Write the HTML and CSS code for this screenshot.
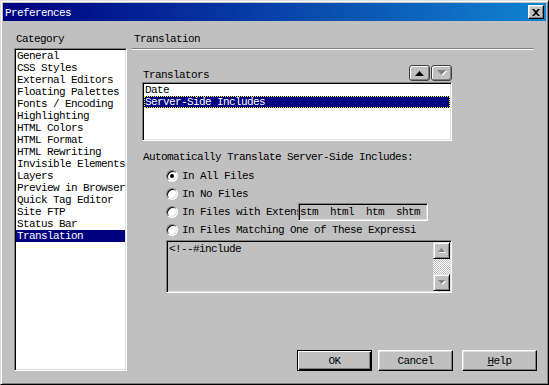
FILE: index.html
```html
<!DOCTYPE html>
<html lang="en">
<head>
    <meta charset="UTF-8">
    <title>Preferences</title>
    <link rel="stylesheet" href="styles.css">
</head>
<body>
    <div class="window">
        <div class="titlebar">
            <span class="title">Preferences</span>
            <span class="close-btn">
                <svg width="8" height="7" viewBox="0 0 8 7"><path d="M0 0h2l2 2 2-2h2L5 3.5 8 7H6L4 5 2 7H0l3-3.5z"/></svg>
            </span>
        </div>
        <div class="content">
            <div class="category-col">
                <div class="label">Category</div>
                <ul class="listbox category-list">
                    <li>General</li>
                    <li>CSS Styles</li>
                    <li>External Editors</li>
                    <li>Floating Palettes</li>
                    <li>Fonts / Encoding</li>
                    <li>Highlighting</li>
                    <li>HTML Colors</li>
                    <li>HTML Format</li>
                    <li>HTML Rewriting</li>
                    <li>Invisible Elements</li>
                    <li>Layers</li>
                    <li>Preview in Browser</li>
                    <li>Quick Tag Editor</li>
                    <li>Site FTP</li>
                    <li>Status Bar</li>
                    <li class="selected">Translation</li>
                </ul>
            </div>
            <div class="panel">
                <div class="label">Translation</div>
                <div class="rule"></div>
                <div class="panel-body">
                    <div class="translators-head">
                        <span class="translators-label">Translators</span>
                        <div class="arrow-btns">
                            <span class="arrow-btn">
                                <svg width="9" height="5" viewBox="0 0 9 5"><path d="M4.5 0L9 5H0z"/></svg>
                            </span>
                            <span class="arrow-btn">
                                <svg width="10" height="6" viewBox="0 0 10 6"><path d="M1 1h9L5.5 6z" fill="#fff"/><path d="M0 0h9L4.5 5z" fill="#808080"/></svg>
                            </span>
                        </div>
                    </div>
                    <ul class="listbox translators-list">
                        <li>Date</li>
                        <li class="selected focused">Server-Side Includes</li>
                    </ul>
                    <div class="auto-label">Automatically Translate Server-Side Includes:</div>
                    <div class="radio-group">
                        <div class="radio-row">
                            <span class="radio checked"></span>
                            <span class="radio-text">In All Files</span>
                        </div>
                        <div class="radio-row">
                            <span class="radio"></span>
                            <span class="radio-text">In No Files</span>
                        </div>
                        <div class="radio-row">
                            <span class="radio"></span>
                            <span class="radio-text ext-label">In Files with Extensions:</span>
                            <div class="field ext-field">stm  html  htm  shtm</div>
                        </div>
                        <div class="radio-row">
                            <span class="radio"></span>
                            <span class="radio-text match-label">In Files Matching One of These Expressions:</span>
                        </div>
                        <div class="field textarea">
                            <div class="textarea-text">&lt;!--#include</div>
                            <div class="scrollbar">
                                <span class="scroll-btn">
                                    <svg width="8" height="5" viewBox="0 0 8 5"><path d="M4.5 1L8 5H1z" fill="#fff"/><path d="M3.5 0L7 4H0z" fill="#808080"/></svg>
                                </span>
                                <span class="scroll-track"></span>
                                <span class="scroll-btn">
                                    <svg width="8" height="5" viewBox="0 0 8 5"><path d="M1 1h7L4.5 5z" fill="#fff"/><path d="M0 0h7L3.5 4z" fill="#808080"/></svg>
                                </span>
                            </div>
                        </div>
                    </div>
                </div>
                <div class="dialog-buttons">
                    <button class="btn default">OK</button>
                    <button class="btn">Cancel</button>
                    <button class="btn help"><u>H</u>elp</button>
                </div>
            </div>
        </div>
    </div>
</body>
</html>
```

FILE: styles.css
```css
body {
    margin: 0;
    background-color: #c0c0c0;
    font-family: "Liberation Mono", "DejaVu Sans Mono", monospace;
    font-size: 11px;
    letter-spacing: -0.6px;
    line-height: 12px;
    color: #000;
}
.window {
    width: 549px;
    height: 385px;
    box-sizing: border-box;
    padding: 2px;
    background-color: #c0c0c0;
    border: 1px solid;
    border-color: #dfdfdf #000 #000 #dfdfdf;
    box-shadow: inset 1px 1px #fff, inset -1px -1px #808080;
    display: flex;
    flex-direction: column;
}
.titlebar {
    height: 18px;
    padding: 0 2px;
    background: linear-gradient(90deg, #000080, #1084d0);
    color: #fff;
    display: flex;
    align-items: center;
    justify-content: space-between;
}
.title {
    padding-top: 1px;
}
.close-btn {
    width: 16px;
    height: 14px;
    box-sizing: border-box;
    background-color: #c0c0c0;
    border: 1px solid;
    border-color: #fff #000 #000 #fff;
    box-shadow: inset -1px -1px #808080, inset 1px 1px #dfdfdf;
    display: flex;
    align-items: center;
    justify-content: center;
}
.content {
    flex: 1;
    display: flex;
    gap: 5px;
    padding: 12px 9px 11px 11px;
}
.category-col {
    width: 113px;
    display: flex;
    flex-direction: column;
}
.label {
    height: 12px;
    padding-left: 2px;
    margin-bottom: 3px;
}
.listbox {
    margin: 0;
    padding: 1px;
    list-style: none;
    background-color: #fff;
    border: 1px solid;
    border-color: #808080 #fff #fff #808080;
    box-shadow: inset 1px 1px #000, inset -1px -1px #dfdfdf;
    white-space: nowrap;
    overflow: hidden;
}
.listbox li {
    height: 12px;
    padding-left: 1px;
}
.listbox li.selected {
    background-color: #000080;
    color: #fff;
}
.listbox li.focused {
    outline: 1px dotted #ffff00;
    outline-offset: -1px;
}
.category-list {
    flex: 1;
}
.panel {
    width: 405px;
    display: flex;
    flex-direction: column;
}
.rule {
    width: 402px;
    border-top: 1px solid #808080;
    border-bottom: 1px solid #fff;
}
.panel-body {
    padding-left: 10px;
}
.translators-head {
    width: 310px;
    height: 32px;
    display: flex;
    justify-content: space-between;
    align-items: flex-end;
}
.translators-label {
    padding-left: 1px;
    margin-bottom: 1px;
}
.arrow-btns {
    display: flex;
    gap: 1px;
    margin-bottom: 1px;
}
.arrow-btn {
    width: 21px;
    height: 16px;
    box-sizing: border-box;
    border: 1px solid #404040;
    border-radius: 3px;
    background-color: #c0c0c0;
    box-shadow: inset 1px 1px #fff, inset -1px -1px #808080;
    display: flex;
    align-items: center;
    justify-content: center;
}
.translators-list {
    width: 310px;
    height: 59px;
    box-sizing: border-box;
}
.auto-label {
    margin-top: 10px;
    padding-left: 1px;
}
.radio-group {
    margin-top: 4px;
    padding-left: 24px;
}
.radio-row {
    height: 18px;
    display: flex;
    align-items: center;
}
.radio {
    width: 12px;
    height: 12px;
    box-sizing: border-box;
    border-radius: 50%;
    border: 1px solid;
    border-color: #808080 #fff #fff #808080;
    box-shadow: inset 1px 1px #000, inset -1px -1px #dfdfdf;
    background-color: #fff;
    margin-right: 4px;
    flex-shrink: 0;
    display: flex;
    align-items: center;
    justify-content: center;
}
.radio.checked::after {
    content: "";
    width: 4px;
    height: 4px;
    border-radius: 50%;
    background-color: #000;
}
.radio-text {
    white-space: nowrap;
    overflow: hidden;
}
.ext-label {
    width: 116px;
}
.match-label {
    width: 234px;
}
.field {
    box-sizing: border-box;
    background-color: #c0c0c0;
    border: 1px solid;
    border-color: #808080 #fff #fff #808080;
    box-shadow: inset 1px 1px #000, inset -1px -1px #dfdfdf;
}
.ext-field {
    width: 130px;
    height: 18px;
    padding: 2px 2px 0 1px;
    white-space: pre;
    overflow: hidden;
}
.textarea {
    width: 286px;
    height: 53px;
    margin-top: 1px;
    padding: 1px;
    display: flex;
    justify-content: space-between;
}
.textarea-text {
    padding: 1px 0 0 1px;
}
.scrollbar {
    width: 17px;
    display: flex;
    flex-direction: column;
}
.scroll-btn {
    height: 17px;
    box-sizing: border-box;
    background-color: #c0c0c0;
    border: 1px solid;
    border-color: #dfdfdf #000 #000 #dfdfdf;
    box-shadow: inset 1px 1px #fff, inset -1px -1px #808080;
    display: flex;
    align-items: center;
    justify-content: center;
}
.scroll-track {
    flex: 1;
    background: repeating-conic-gradient(#fff 0 25%, #c0c0c0 0 50%) 0 0 / 2px 2px;
}
.dialog-buttons {
    margin-top: auto;
    display: flex;
    justify-content: flex-end;
}
.btn {
    width: 75px;
    height: 21px;
    box-sizing: border-box;
    padding: 0;
    font: inherit;
    letter-spacing: inherit;
    color: #000;
    background-color: #c0c0c0;
    border: 1px solid;
    border-color: #fff #000 #000 #fff;
    box-shadow: inset -1px -1px #808080, inset 1px 1px #dfdfdf;
    margin-left: 6px;
}
.btn.help {
    margin-left: 9px;
}
.btn.default {
    border: 1px solid #000;
    box-shadow: inset 1px 1px #fff, inset -1px -1px #000, inset -2px -2px #808080;
}
```
